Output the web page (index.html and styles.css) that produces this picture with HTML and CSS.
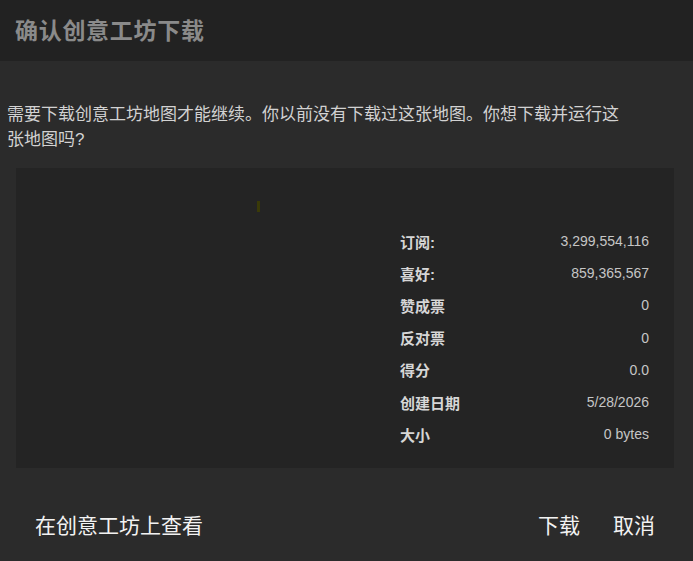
FILE: index.html
```html
<!DOCTYPE html>
<html lang="zh-CN">
<head>
<meta charset="utf-8">
<title>确认创意工坊下载</title>
<link rel="stylesheet" href="styles.css">
</head>
<body>
<div class="dialog">
  <header class="header">
    <h1 class="title">确认创意工坊下载</h1>
  </header>
  <p class="message">需要下载创意工坊地图才能继续。你以前没有下载过这张地图。你想下载并运行这张地图吗?</p>
  <section class="panel">
    <div class="preview"><span class="mark"></span></div>
    <dl class="stats">
      <div class="row"><dt>订阅:</dt><dd>3,299,554,116</dd></div>
      <div class="row"><dt>喜好:</dt><dd>859,365,567</dd></div>
      <div class="row"><dt>赞成票</dt><dd>0</dd></div>
      <div class="row"><dt>反对票</dt><dd>0</dd></div>
      <div class="row"><dt>得分</dt><dd>0.0</dd></div>
      <div class="row"><dt>创建日期</dt><dd>5/28/2026</dd></div>
      <div class="row"><dt>大小</dt><dd>0 bytes</dd></div>
    </dl>
  </section>
  <footer class="footer">
    <button class="btn">在创意工坊上查看</button>
    <div class="actions">
      <button class="btn">下载</button>
      <button class="btn">取消</button>
    </div>
  </footer>
</div>
</body>
</html>
```

FILE: styles.css
```css
html, body {
  margin: 0;
  padding: 0;
  background: #2b2b2b;
}
body {
  font-family: "Liberation Sans", "Noto Sans CJK SC", sans-serif;
  width: 693px;
  height: 561px;
  overflow: hidden;
}
.dialog {
  display: flex;
  flex-direction: column;
  height: 561px;
}
.header {
  flex-shrink: 0;
  background: #222222;
  height: 61px;
  display: flex;
  align-items: center;
  padding-left: 15px;
  box-sizing: border-box;
}
.title {
  margin: 0;
  font-size: 23px;
  font-weight: bold;
  color: #8a8a8a;
  letter-spacing: 0.7px;
  padding-bottom: 3px;
}
.message {
  flex-shrink: 0;
  margin: 41px 0 0 7px;
  width: 622px;
  font-size: 17px;
  line-height: 25px;
  color: #d2d2d2;
}
.panel {
  flex-shrink: 0;
  margin: 16px 19px 0 16px;
  height: 300px;
  background: #242424;
  display: flex;
}
.preview {
  flex: 1;
  position: relative;
}
.mark {
  position: absolute;
  left: 241px;
  top: 33px;
  width: 3px;
  height: 11px;
  background: #3a3a08;
}
.stats {
  margin: 0;
  width: 249px;
  padding: 57px 25px 0 0;
  display: flex;
  flex-direction: column;
}
.row {
  display: flex;
  justify-content: space-between;
  align-items: center;
  height: 32.2px;
}
.row dt {
  font-size: 15px;
  font-weight: bold;
  color: #d6d6d6;
}
.row dd {
  margin: 0;
  font-size: 14px;
  color: #c6c6c6;
}
.footer {
  flex-shrink: 0;
  display: flex;
  justify-content: space-between;
  align-items: center;
  padding: 0 38px 0 35px;
  height: 112px;
}
.actions {
  display: flex;
  gap: 33px;
}
.btn {
  background: none;
  border: 0;
  padding: 0;
  font-family: "Noto Sans CJK SC", sans-serif;
  font-size: 21px;
  color: #f2f2f2;
  cursor: pointer;
}
```
